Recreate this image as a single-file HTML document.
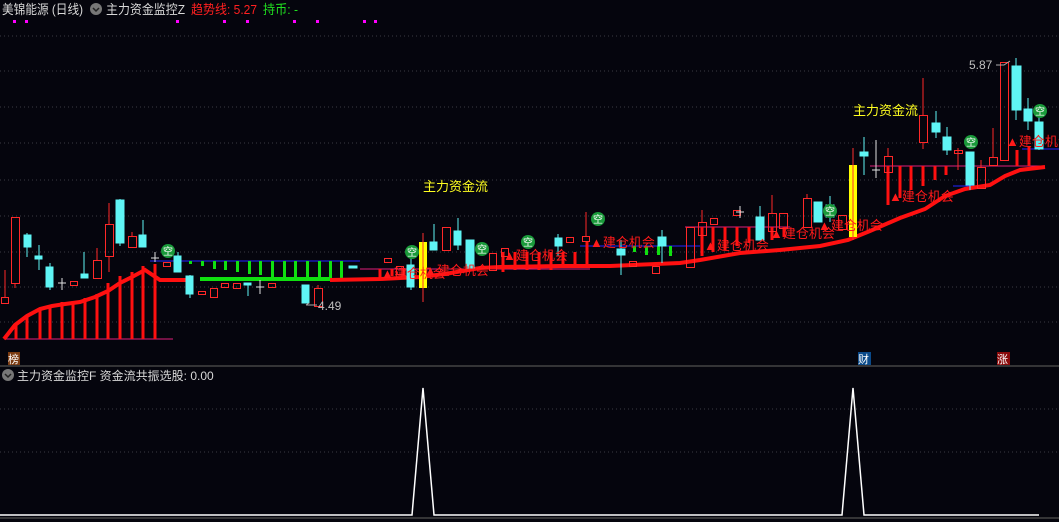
<!DOCTYPE html>
<html><head><meta charset="utf-8"><style>
html,body{margin:0;padding:0;background:#05050d;width:1059px;height:522px;overflow:hidden;font-family:"Liberation Sans","Noto Sans CJK SC",sans-serif}
svg{position:absolute;left:0;top:0}
</style></head><body>
<svg width="1059" height="522" xmlns="http://www.w3.org/2000/svg" font-family="Liberation Sans, Noto Sans CJK SC, sans-serif">
<rect width="1059" height="522" fill="#05050d"/>
<g stroke="#3a3a44" stroke-dasharray="1,3" stroke-width="1">
<line x1="0" y1="36" x2="1059" y2="36"/><line x1="0" y1="71" x2="1059" y2="71"/><line x1="0" y1="107" x2="1059" y2="107"/><line x1="0" y1="143" x2="1059" y2="143"/><line x1="0" y1="180" x2="1059" y2="180"/><line x1="0" y1="216" x2="1059" y2="216"/><line x1="0" y1="252" x2="1059" y2="252"/><line x1="0" y1="287" x2="1059" y2="287"/><line x1="0" y1="322" x2="1059" y2="322"/>
<line x1="0" y1="409" x2="1059" y2="409"/><line x1="0" y1="452" x2="1059" y2="452"/>
</g>
<line x1="0" y1="366" x2="1059" y2="366" stroke="#444" stroke-width="1.5"/>
<line x1="0" y1="518" x2="1059" y2="518" stroke="#444" stroke-width="1.5"/>
<!-- header -->
<text x="2" y="14" font-size="13" fill="#d8d8d8" textLength="81" lengthAdjust="spacingAndGlyphs">美锦能源 (日线)</text>
<circle cx="96" cy="9" r="6" fill="#777"/><path d="M93 8l3 3 3-3" stroke="#222" fill="none" stroke-width="1.5"/>
<text x="106" y="14" font-size="13" fill="#d8d8d8" textLength="79" lengthAdjust="spacingAndGlyphs">主力资金监控Z</text>
<text x="191" y="14" font-size="13" fill="#ff2020" textLength="66" lengthAdjust="spacingAndGlyphs">趋势线: 5.27</text>
<text x="263" y="14" font-size="13" fill="#20e020" textLength="35" lengthAdjust="spacingAndGlyphs">持币: -</text>
<g fill="#ff00ff"><rect x="13" y="20" width="3" height="3"/><rect x="25" y="20" width="3" height="3"/><rect x="176" y="20" width="3" height="3"/><rect x="223" y="20" width="3" height="3"/><rect x="246" y="20" width="3" height="3"/><rect x="293" y="20" width="3" height="3"/><rect x="316" y="20" width="3" height="3"/><rect x="363" y="20" width="3" height="3"/><rect x="374" y="20" width="3" height="3"/></g>
<!-- lines -->
<line x1="150" y1="261" x2="360" y2="261" stroke="#2222ff" stroke-width="1"/>
<line x1="4" y1="339" x2="173" y2="339" stroke="#e0207a" stroke-width="1"/>
<line x1="360" y1="269" x2="590" y2="269" stroke="#e0207a" stroke-width="1"/>
<line x1="685" y1="227" x2="790" y2="227" stroke="#e0207a" stroke-width="1"/>
<line x1="870" y1="166" x2="1045" y2="166" stroke="#e0207a" stroke-width="1"/>
<line x1="580" y1="246" x2="700" y2="246" stroke="#2222ff"/><line x1="953" y1="186" x2="990" y2="186" stroke="#2222ff"/><line x1="1022" y1="149" x2="1059" y2="149" stroke="#2222ff"/>
<!-- red vertical bars left -->
<g stroke="#ff1010" stroke-width="3">
<line x1="16" y1="339" x2="16" y2="325"/><line x1="27" y1="339" x2="27" y2="315"/><line x1="40" y1="339" x2="40" y2="309"/><line x1="50" y1="339" x2="50" y2="305"/><line x1="62" y1="339" x2="62" y2="302"/><line x1="73" y1="339" x2="73" y2="301"/><line x1="85" y1="339" x2="85" y2="298"/><line x1="97" y1="339" x2="97" y2="294"/><line x1="108" y1="339" x2="108" y2="283"/><line x1="120" y1="339" x2="120" y2="276"/><line x1="132" y1="339" x2="132" y2="272"/><line x1="143" y1="339" x2="143" y2="266"/><line x1="155" y1="339" x2="155" y2="264"/>
</g>
<!-- green bars -->
<g fill="#10e010">
<rect x="189" y="261" width="3" height="3"/><rect x="201" y="261" width="3" height="5"/><rect x="213" y="261" width="3" height="8"/><rect x="224" y="261" width="3" height="9"/><rect x="236" y="261" width="3" height="11"/><rect x="248" y="261" width="3" height="13"/><rect x="259" y="261" width="3" height="14"/><rect x="271" y="261" width="3" height="16"/><rect x="283" y="261" width="3" height="17"/><rect x="294" y="261" width="3" height="19"/><rect x="306" y="261" width="3" height="20"/><rect x="318" y="261" width="3" height="20"/><rect x="329" y="261" width="3" height="20"/><rect x="340" y="261" width="3" height="18"/>
<rect x="633" y="246" width="3" height="6"/><rect x="645" y="246" width="3" height="9"/><rect x="657" y="246" width="3" height="9"/><rect x="669" y="246" width="3" height="10"/>
</g>
<!-- red stems mid/right -->
<g stroke="#ff1010" stroke-width="3">
<line x1="380" y1="269" x2="380" y2="280"/><line x1="392" y1="269" x2="392" y2="276"/><line x1="404" y1="269" x2="404" y2="276"/><line x1="503" y1="252" x2="503" y2="272"/><line x1="515" y1="252" x2="515" y2="270"/><line x1="527" y1="252" x2="527" y2="270"/><line x1="539" y1="252" x2="539" y2="270"/><line x1="551" y1="252" x2="551" y2="270"/><line x1="563" y1="252" x2="563" y2="268"/><line x1="575" y1="252" x2="575" y2="268"/><line x1="587" y1="242" x2="587" y2="268"/>
<line x1="702" y1="227" x2="702" y2="256"/><line x1="713" y1="227" x2="713" y2="252"/><line x1="725" y1="227" x2="725" y2="250"/><line x1="737" y1="227" x2="737" y2="246"/><line x1="749" y1="227" x2="749" y2="243"/><line x1="760" y1="227" x2="760" y2="240"/><line x1="772" y1="227" x2="772" y2="240"/><line x1="784" y1="227" x2="784" y2="237"/>
<line x1="888" y1="166" x2="888" y2="205"/><line x1="900" y1="166" x2="900" y2="198"/><line x1="911" y1="166" x2="911" y2="190"/><line x1="923" y1="166" x2="923" y2="186"/><line x1="935" y1="166" x2="935" y2="180"/><line x1="946" y1="166" x2="946" y2="175"/><line x1="1017" y1="150" x2="1017" y2="166"/><line x1="1029" y1="146" x2="1029" y2="166"/>
</g>
<!-- trend line -->
<polyline fill="none" stroke="#ff1010" stroke-width="4" points="4,339 15,325 27,316 40,309 52,306 65,304 80,302 95,297 108,291 120,283 132,277 145,270 160,280 190,280"/>
<polyline fill="none" stroke="#10e010" stroke-width="4" points="200,279 330,279"/>
<polyline fill="none" stroke="#ff1010" stroke-width="4" points="330,280 380,279 420,277 445,274 480,268 500,267 560,266 610,266 680,263 700,260 740,253 780,250 820,246 848,240 870,231 900,218 925,209 945,196 965,189 990,185 1005,176 1020,170 1045,167"/>
<!-- yellow bars -->
<rect x="419" y="242" width="8" height="46" fill="#ffff00"/><line x1="423" y1="233" x2="423" y2="302" stroke="#ff3030"/>
<rect x="849" y="165" width="8" height="72" fill="#ffff00"/><line x1="853" y1="148" x2="853" y2="240" stroke="#ff3030"/>
<!-- candles: cyan filled -->
<g fill="#5ff5f5" stroke="#5ff5f5">
<rect x="24" y="235" width="7" height="12"/><line x1="27" y1="233" x2="27" y2="257"/>
<rect x="35" y="256" width="7" height="3"/><line x1="39" y1="245" x2="39" y2="270"/>
<rect x="46" y="267" width="7" height="20"/><line x1="50" y1="263" x2="50" y2="290"/>
<rect x="81" y="274" width="7" height="4"/><line x1="84" y1="252" x2="84" y2="278"/>
<rect x="116" y="200" width="8" height="43"/><line x1="120" y1="199" x2="120" y2="246"/>
<rect x="139" y="235" width="7" height="12"/><line x1="143" y1="220" x2="143" y2="247"/>
<rect x="174" y="256" width="7" height="16"/><line x1="178" y1="252" x2="178" y2="272"/>
<rect x="186" y="276" width="7" height="18"/><line x1="190" y1="275" x2="190" y2="298"/>
<rect x="244" y="283" width="7" height="2"/><line x1="248" y1="283" x2="248" y2="296"/>
<rect x="302" y="285" width="7" height="18"/>
<rect x="349" y="266" width="8" height="2"/>
<rect x="407" y="265" width="7" height="22"/><line x1="411" y1="258" x2="411" y2="290"/>
<rect x="430" y="242" width="7" height="8"/><line x1="434" y1="224" x2="434" y2="250"/>
<rect x="454" y="231" width="7" height="14"/><line x1="458" y1="218" x2="458" y2="250"/>
<rect x="466" y="240" width="8" height="28"/>
<rect x="555" y="238" width="7" height="8"/><line x1="558" y1="234" x2="558" y2="256"/>
<rect x="617" y="249" width="8" height="6"/><line x1="621" y1="240" x2="621" y2="275"/>
<rect x="658" y="237" width="8" height="9"/><line x1="662" y1="230" x2="662" y2="263"/>
<rect x="756" y="217" width="8" height="23"/><line x1="760" y1="206" x2="760" y2="240"/>
<rect x="814" y="202" width="8" height="20"/>
<rect x="826" y="205" width="8" height="12"/><line x1="830" y1="196" x2="830" y2="222"/>
<rect x="860" y="152" width="8" height="4"/><line x1="864" y1="137" x2="864" y2="175"/>
<rect x="932" y="123" width="8" height="9"/><line x1="936" y1="111" x2="936" y2="138"/>
<rect x="943" y="137" width="8" height="13"/><line x1="947" y1="127" x2="947" y2="155"/>
<rect x="966" y="152" width="8" height="33"/><line x1="970" y1="152" x2="970" y2="190"/>
<rect x="1012" y="66" width="9" height="44"/><line x1="1016" y1="58" x2="1016" y2="120"/>
<rect x="1024" y="109" width="8" height="12"/><line x1="1028" y1="98" x2="1028" y2="130"/>
<rect x="1035" y="122" width="8" height="27"/><line x1="1039" y1="110" x2="1039" y2="150"/>
</g>
<!-- red hollow candles -->
<g fill="none" stroke="#ff2828">
<rect x="1.5" y="297.5" width="7" height="6"/><line x1="5" y1="270" x2="5" y2="297"/>
<rect x="11.5" y="217.5" width="8" height="66"/><line x1="15" y1="284" x2="15" y2="288"/>
<rect x="70.5" y="281.5" width="7" height="4"/>
<rect x="93.5" y="260.5" width="8" height="18"/><line x1="97" y1="248" x2="97" y2="260"/>
<rect x="105.5" y="224.5" width="8" height="32"/><line x1="109" y1="203" x2="109" y2="224"/><line x1="109" y1="257" x2="109" y2="272"/>
<rect x="128.5" y="236.5" width="8" height="11"/><line x1="132" y1="232" x2="132" y2="236"/>
<rect x="163.5" y="262.5" width="7" height="4"/>
<rect x="198.5" y="291.5" width="7" height="3"/><rect x="210.5" y="288.5" width="7" height="9"/><rect x="221.5" y="283.5" width="7" height="4"/><rect x="233.5" y="283.5" width="7" height="5"/><rect x="268.5" y="283.5" width="7" height="4"/>
<rect x="314.5" y="288.5" width="8" height="18"/><line x1="318" y1="285" x2="318" y2="288"/>
<rect x="384.5" y="258.5" width="7" height="4"/><rect x="396.5" y="266.5" width="7" height="8"/>
<rect x="442.5" y="227.5" width="8" height="23"/>
<rect x="489.5" y="253.5" width="7" height="17"/>
<rect x="501.5" y="248.5" width="7" height="8"/>
<rect x="566.5" y="237.5" width="7" height="5"/><rect x="582.5" y="236.5" width="7" height="5"/><line x1="586" y1="212" x2="586" y2="236"/>
<rect x="629.5" y="261.5" width="7" height="5"/><rect x="652.5" y="266.5" width="7" height="7"/>
<rect x="686.5" y="227.5" width="8" height="40"/>
<rect x="698.5" y="222.5" width="8" height="13"/><line x1="702" y1="210" x2="702" y2="222"/>
<rect x="710.5" y="218.5" width="7" height="6"/>
<rect x="733.5" y="210.5" width="7" height="5"/>
<rect x="768.5" y="213.5" width="8" height="18"/><line x1="772" y1="195" x2="772" y2="213"/>
<rect x="779.5" y="213.5" width="8" height="15"/>
<rect x="803.5" y="198.5" width="8" height="29"/><line x1="807" y1="194" x2="807" y2="198"/>
<rect x="838.5" y="215.5" width="8" height="14"/>
<rect x="884.5" y="156.5" width="8" height="16"/><line x1="888" y1="148" x2="888" y2="156"/>
<rect x="919.5" y="115.5" width="8" height="27"/><line x1="923" y1="78" x2="923" y2="115"/><line x1="923" y1="142" x2="923" y2="149"/>
<rect x="954.5" y="150.5" width="8" height="3"/><line x1="958" y1="148" x2="958" y2="170"/>
<rect x="977.5" y="167.5" width="8" height="21"/><line x1="981" y1="160" x2="981" y2="167"/>
<rect x="989.5" y="157.5" width="8" height="8"/><line x1="993" y1="128" x2="993" y2="157"/>
<rect x="1000.5" y="62.5" width="8" height="98"/>
</g>
<!-- white crosses -->
<g stroke="#e0e0e0"><line x1="58" y1="283" x2="66" y2="283"/><line x1="62" y1="278" x2="62" y2="290"/><line x1="151" y1="258" x2="159" y2="258"/><line x1="155" y1="252" x2="155" y2="262"/><line x1="256" y1="287" x2="264" y2="287"/><line x1="260" y1="280" x2="260" y2="294"/><line x1="736" y1="212" x2="744" y2="212"/><line x1="740" y1="206" x2="740" y2="218"/><line x1="872" y1="170" x2="880" y2="170"/><line x1="876" y1="140" x2="876" y2="178"/></g>
<!-- 建仓机会 labels -->
<g fill="#ff1a1a" font-size="13">
<text x="381" y="278">▲建仓机会</text><text x="424" y="275">▲建仓机会</text><text x="503" y="260">▲建仓机会</text><text x="590" y="247">▲建仓机会</text><text x="704" y="250">▲建仓机会</text><text x="770" y="238">▲建仓机会</text><text x="818" y="230">▲建仓机会</text><text x="889" y="201">▲建仓机会</text><text x="1006" y="146">▲建仓机会</text>
</g>
<g fill="#ffff20" font-size="13"><text x="423" y="191">主力资金流</text><text x="853" y="115">主力资金流</text></g>
<!-- 空 circles -->
<g font-size="10" fill="#fff" text-anchor="middle">
<circle cx="168" cy="251" r="7" fill="#1a9a3a"/><text x="168" y="255">空</text>
<circle cx="412" cy="252" r="7" fill="#1a9a3a"/><text x="412" y="256">空</text>
<circle cx="482" cy="249" r="7" fill="#1a9a3a"/><text x="482" y="253">空</text>
<circle cx="528" cy="242" r="7" fill="#1a9a3a"/><text x="528" y="246">空</text>
<circle cx="598" cy="219" r="7" fill="#1a9a3a"/><text x="598" y="223">空</text>
<circle cx="830" cy="211" r="7" fill="#1a9a3a"/><text x="830" y="215">空</text>
<circle cx="971" cy="142" r="7" fill="#1a9a3a"/><text x="971" y="146">空</text>
<circle cx="1040" cy="111" r="7" fill="#1a9a3a"/><text x="1040" y="115">空</text>
</g>
<text x="318" y="310" font-size="12" fill="#c0c0c0">4.49</text><path d="M306 305h11M306 305l3-2" stroke="#aaa" fill="none"/>
<text x="969" y="69" font-size="12" fill="#c0c0c0">5.87</text><path d="M996 65h8l6-4" stroke="#aaa" fill="none"/>
<!-- bottom labels -->
<rect x="8" y="352" width="12" height="13" fill="#7a3a10"/><text x="8" y="363" font-size="11" fill="#fff">榜</text>
<rect x="858" y="352" width="13" height="13" fill="#0a4a8a"/><text x="858" y="363" font-size="11" fill="#fff">财</text>
<rect x="997" y="352" width="13" height="13" fill="#8a0a0a"/><text x="997" y="363" font-size="11" fill="#fff">涨</text>
<!-- lower panel -->
<circle cx="8" cy="375" r="6" fill="#777"/><path d="M5 374l3 3 3-3" stroke="#222" fill="none" stroke-width="1.5"/>
<text x="17" y="380" font-size="12" fill="#d8d8d8">主力资金监控F  资金流共振选股: 0.00</text>
<polyline fill="none" stroke="#fff" stroke-width="1.5" points="0,515 412,515 423,388 434,515 842,515 853,388 864,515 1039,515"/>
</svg>
</body></html>
